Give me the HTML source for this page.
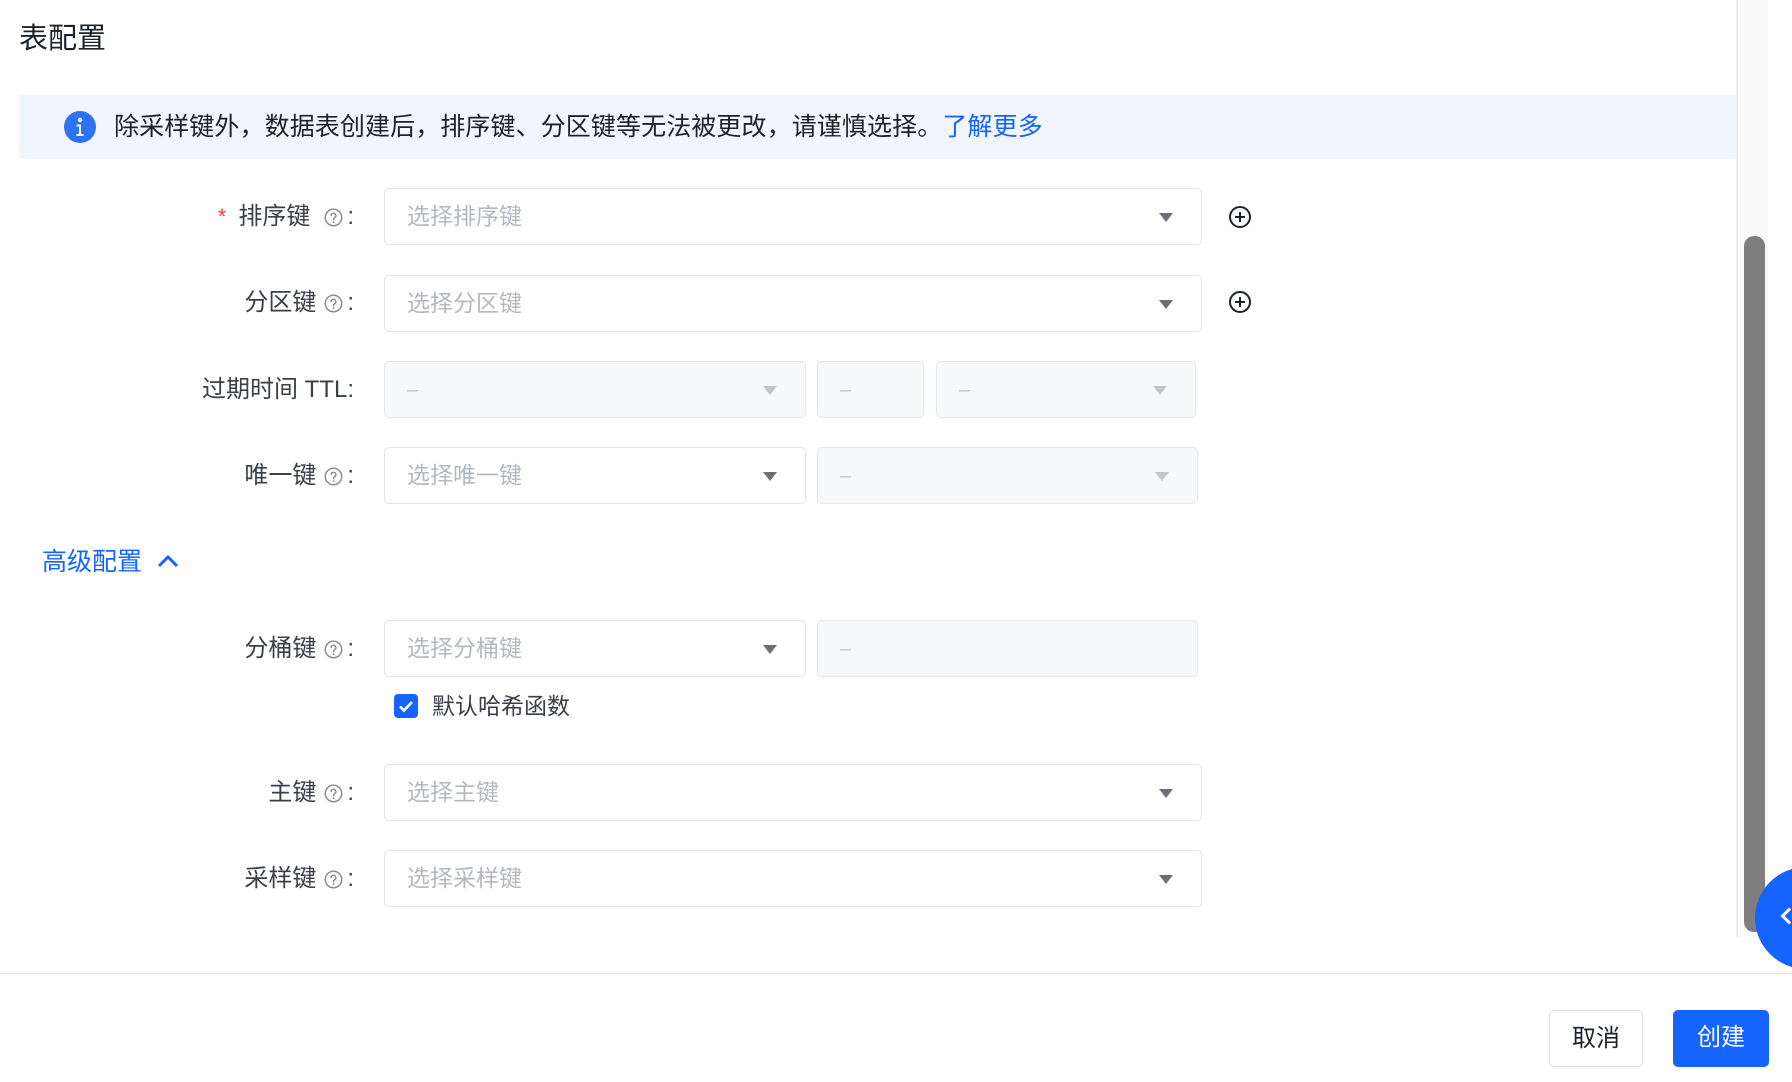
<!DOCTYPE html>
<html><head><meta charset="utf-8">
<style>
*{box-sizing:border-box;margin:0;padding:0}
html,body{width:1792px;height:1082px;overflow:hidden;background:#fff;font-family:"Liberation Sans","Noto Sans CJK SC",sans-serif;color:#1d2129}
.a{position:absolute}
.title{left:19px;top:15px;font-size:29px;color:#1d2129}
.alert{left:19px;top:95px;width:1718px;height:64px;background:#f0f5ff}
.alert .ic{position:absolute;left:45px;top:16px}
.alert .t{position:absolute;left:95px;top:14px;font-size:25px;letter-spacing:0.1px;line-height:36px;color:#1d2129;white-space:nowrap}
.alert .t span{color:#1664ff}
.lbl{right:1438px;font-size:24px;line-height:30px;color:#3b3f46;white-space:nowrap;display:flex;align-items:center}
.lbl .q{margin:0 4px 0 8px;display:inline-block}
.lbl .star{color:#f53f3f;margin-right:12px;font-size:22px}
.sel{border:1px solid #e5e6eb;border-radius:5px;height:57px;background:#fff}
.sel.dis{background:#f7f8fa}
.ph{position:absolute;left:22px;top:12px;font-size:23px;line-height:30px;color:#b4b8bf;white-space:nowrap}
.arr{position:absolute;top:24px;width:0;height:0;border-left:7px solid transparent;border-right:7px solid transparent;border-top:9px solid #6b6f77}
.dis .arr{border-top-color:#c2c5cb}
.dash{position:absolute;left:22px;top:15px;font-size:20px;line-height:26px;color:#c2c5cb}
.btn{top:1010px;height:57px;border-radius:5px;font-size:24px;line-height:55px;text-align:center}
</style></head><body>
<div class="a title">表配置</div>
<div class="a alert">
 <svg class="ic" width="32" height="32" viewBox="0 0 32 32"><circle cx="16" cy="16" r="16" fill="#2c72f2"/><circle cx="16" cy="9" r="2.2" fill="#fff"/><path d="M12.5 13.5h4.5v9.5h2.5v2h-7v-2h2.5v-7.5h-2.5z" fill="#fff"/></svg>
 <div class="t">除采样键外，数据表创建后，排序键、分区键等无法被更改，请谨慎选择。<span>了解更多</span></div>
</div>

<svg width="0" height="0" style="position:absolute"><defs><symbol id="q" viewBox="0 0 18 18"><circle cx="9" cy="9" r="7.8" fill="none" stroke="#8a8e96" stroke-width="1.4"/><path d="M6.8 7.2a2.2 2.2 0 1 1 3.2 2c-.7.4-1 .8-1 1.6v.5" fill="none" stroke="#8a8e96" stroke-width="1.4" stroke-linecap="round"/><circle cx="9" cy="13.4" r=".9" fill="#8a8e96"/></symbol>
<symbol id="plus" viewBox="0 0 24 24"><circle cx="12" cy="12" r="10" fill="none" stroke="#1d2129" stroke-width="2"/><path d="M12 7v10M7 12h10" stroke="#1d2129" stroke-width="2"/></symbol></defs></svg>

<div class="a lbl" style="top:202px"><span class="star">*</span>排序键<svg class="q" width="19" height="19" style="margin-left:14px"><use href="#q"/></svg>:</div>
<div class="a sel" style="left:384px;top:188px;width:818px"><div class="ph">选择排序键</div><div class="arr" style="left:774px"></div></div>
<svg class="a" style="left:1228px;top:205px" width="24" height="24"><use href="#plus"/></svg>

<div class="a lbl" style="top:288px">分区键<svg class="q" width="19" height="19"><use href="#q"/></svg>:</div>
<div class="a sel" style="left:384px;top:275px;width:818px"><div class="ph">选择分区键</div><div class="arr" style="left:774px"></div></div>
<svg class="a" style="left:1228px;top:290px" width="24" height="24"><use href="#plus"/></svg>

<div class="a lbl" style="top:375px">过期时间 TTL:</div>
<div class="a sel dis" style="left:384px;top:361px;width:422px"><div class="dash">–</div><div class="arr" style="left:378px"></div></div>
<div class="a sel dis" style="left:817px;top:361px;width:107px"><div class="dash">–</div></div>
<div class="a sel dis" style="left:936px;top:361px;width:260px"><div class="dash">–</div><div class="arr" style="left:216px"></div></div>

<div class="a lbl" style="top:461px">唯一键<svg class="q" width="19" height="19"><use href="#q"/></svg>:</div>
<div class="a sel" style="left:384px;top:447px;width:422px"><div class="ph">选择唯一键</div><div class="arr" style="left:378px"></div></div>
<div class="a sel dis" style="left:817px;top:447px;width:381px"><div class="dash">–</div><div class="arr" style="left:337px"></div></div>

<div class="a" style="left:42px;top:545px;font-size:25px;line-height:34px;color:#1664ff">高级配置</div>
<svg class="a" style="left:156px;top:553px" width="24" height="16" viewBox="0 0 24 16"><path d="M3 13L12 4l9 9" fill="none" stroke="#1664ff" stroke-width="3"/></svg>

<div class="a lbl" style="top:634px">分桶键<svg class="q" width="19" height="19"><use href="#q"/></svg>:</div>
<div class="a sel" style="left:384px;top:620px;width:422px"><div class="ph">选择分桶键</div><div class="arr" style="left:378px"></div></div>
<div class="a sel dis" style="left:817px;top:620px;width:381px"><div class="dash">–</div></div>
<svg class="a" style="left:394px;top:694px" width="24" height="24" viewBox="0 0 24 24"><rect width="24" height="24" rx="4" fill="#1664ff"/><path d="M6 12.5l4 4 8-8.5" fill="none" stroke="#fff" stroke-width="2.6"/></svg>
<div class="a" style="left:432px;top:690px;font-size:23px;line-height:32px;color:#3b3f46">默认哈希函数</div>

<div class="a lbl" style="top:778px">主键<svg class="q" width="19" height="19"><use href="#q"/></svg>:</div>
<div class="a sel" style="left:384px;top:764px;width:818px"><div class="ph">选择主键</div><div class="arr" style="left:774px"></div></div>

<div class="a lbl" style="top:864px">采样键<svg class="q" width="19" height="19"><use href="#q"/></svg>:</div>
<div class="a sel" style="left:384px;top:850px;width:818px"><div class="ph">选择采样键</div><div class="arr" style="left:774px"></div></div>

<div class="a" style="left:1736px;top:0;width:2px;height:937px;background:#ececec"></div>
<div class="a" style="left:1738px;top:0;width:30px;height:937px;background:#fafafa"></div>
<div class="a" style="left:1744px;top:236px;width:21px;height:696px;border-radius:10px;background:#7f7f7f"></div>
<div class="a" style="left:1755px;top:867px;width:102px;height:102px;border-radius:51px;background:#1664ff"></div>
<div class="a" style="left:1783px;top:910px;width:12px;height:12px;border-left:3px solid #fff;border-bottom:3px solid #fff;transform:rotate(45deg)"></div>

<div class="a" style="left:0;top:973px;width:1792px;height:1px;background:#e5e6eb"></div>
<div class="a btn" style="left:1549px;width:94px;border:1px solid #e0e0e0;color:#1d2129;background:#fff">取消</div>
<div class="a btn" style="left:1673px;width:96px;background:#1664ff;color:#fff">创建</div>
</body></html>
